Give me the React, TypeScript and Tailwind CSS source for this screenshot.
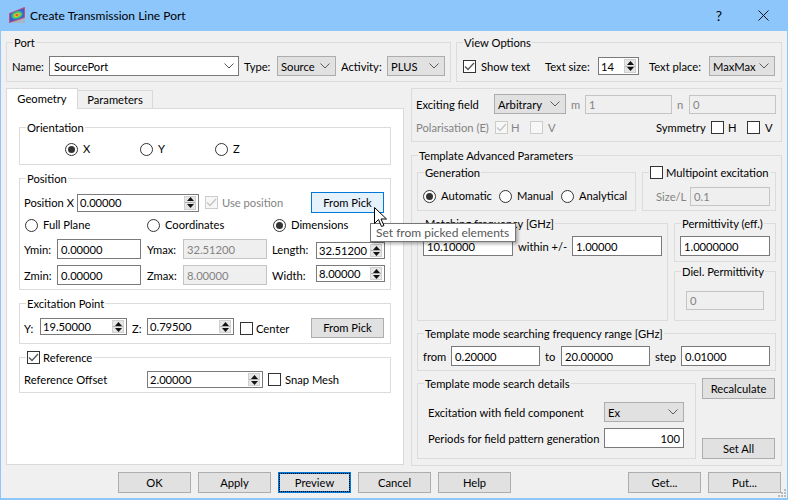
// Create Transmission Line Port dialog, Windows 10 style Qt form.
import type { ReactNode } from "react";
import clsx from "clsx";

function Group({ title, className, inner, children }: { title: ReactNode; className?: string; inner?: string; children: ReactNode }) {
  return (
    <fieldset className={clsx("border border-[#dcdcdc] min-w-0", className)}>
      <legend className="ml-[6px] px-[1px] pt-[1px] h-[14px] leading-[14px] flex items-center whitespace-nowrap">{title}</legend>
      <div className={inner}>{children}</div>
    </fieldset>
  );
}

function Label({ className, children }: { className?: string; children: ReactNode }) {
  return <span className={clsx("shrink-0 pt-[1px] whitespace-nowrap", className)}>{children}</span>;
}

function Field({ value, className, disabled, right }: { value: string; className?: string; disabled?: boolean; right?: boolean }) {
  return (
    <div
      className={clsx(
        "shrink-0 flex items-center px-[3px] pt-[1px] border whitespace-nowrap",
        disabled ? "border-[#c4c4c4] bg-[#efefef] text-[#838383]" : "border-[#7a7a7a] bg-white",
        right && "justify-end",
        className,
      )}
    >
      {value}
    </div>
  );
}

function Spin({ value, className }: { value: string; className?: string }) {
  return (
    <div className={clsx("shrink-0 flex items-center pl-[2px] border border-[#7a7a7a] bg-white", className)}>
      <span className="flex-1 pt-[1px] whitespace-nowrap">{value}</span>
      <div className="flex flex-col self-stretch w-[12px] my-[1px] mr-[2px] border border-[#d0d0d0] bg-[#e6e6e6]">
        <div className="flex-1 flex items-center justify-center border-b border-[#b0b0b0]">
          <svg width="7" height="4" viewBox="0 0 7 4"><path d="M3.5 0 7 4H0z" fill="#111" /></svg>
        </div>
        <div className="flex-1 flex items-center justify-center">
          <svg width="7" height="4" viewBox="0 0 7 4"><path d="M0 0h7L3.5 4z" fill="#111" /></svg>
        </div>
      </div>
    </div>
  );
}

function Chevron() {
  return (
    <svg width="10" height="6" viewBox="0 0 10 6" className="shrink-0" fill="none" stroke="#5a5a5a" strokeWidth="1">
      <path d="M.5.5 5 5 9.500.5" />
    </svg>
  );
}

function Select({ value, className }: { value: string; className?: string }) {
  return (
    <div className={clsx("shrink-0 flex items-center justify-between pl-[3px] pr-[5px] border border-[#adadad] bg-[#e1e1e1]", className)}>
      <span className="pt-[1px]">{value}</span>
      <Chevron />
    </div>
  );
}

function Check({ checked, disabled, className }: { checked?: boolean; disabled?: boolean; className?: string }) {
  return (
    <span
      className={clsx(
        "shrink-0 w-[13px] h-[13px] border flex items-center justify-center",
        disabled ? "border-[#cccccc] bg-[#f7f7f7]" : "border-[#333333] bg-white",
        className,
      )}
    >
      {checked && (
        <svg width="11" height="9" viewBox="0 0 11 9" fill="none" stroke={disabled ? "#c4c4c4" : "#555555"} strokeWidth="1.3">
          <path d="M1 4.500 4 7.500 10 1" />
        </svg>
      )}
    </span>
  );
}

function Radio({ label, checked, className }: { label: string; checked?: boolean; className?: string }) {
  return (
    <div className={clsx("shrink-0 flex items-center h-[16px] whitespace-nowrap", className)}>
      <span className="shrink-0 w-[13px] h-[13px] mr-[5px] rounded-full border border-[#333333] bg-white flex items-center justify-center">
        {checked && <span className="w-[7px] h-[7px] rounded-full bg-[#333333]" />}
      </span>
      {label}
    </div>
  );
}

function Btn({ label, className }: { label: string; className?: string }) {
  return (
    <div className={clsx("shrink-0 w-[73px] h-[21px] flex items-center justify-center border border-[#adadad] bg-[#e1e1e1]", className)}>
      {label}
    </div>
  );
}

function AppIcon() {
  return (
    <svg width="17" height="17" viewBox="0 0 17 17" className="shrink-0">
      <path d="M4 14.500 16 11V16H4z" fill="#a9b6c2" />
      <path d="M.5 6.500 15.500.5V10.500L.5 15.500z" fill="#3f5ccb" stroke="#c2527a" />
      <ellipse cx="8" cy="8" rx="6" ry="3.800" transform="rotate(-20 8 8)" fill="#27b2a4" />
      <ellipse cx="8" cy="8" rx="4.500" ry="2.700" transform="rotate(-20 8 8)" fill="#73c83c" />
      <ellipse cx="8" cy="8" rx="3" ry="1.700" transform="rotate(-20 8 8)" fill="#e2c83a" />
      <ellipse cx="8" cy="8" rx="1.700" ry="0.900" transform="rotate(-20 8 8)" fill="#d8463a" />
    </svg>
  );
}

function PositionRows() {
  return (
    <>
      <div className="flex items-center h-[21px]">
        <Label className="w-[53px]">Position X</Label>
        <Spin value="0.00000" className="w-[122px] h-[18px]" />
        <Check checked disabled className="ml-[6px]" />
        <Label className="ml-[4px] w-[89px] text-[#838383]">Use position</Label>
        <Btn label="From Pick" className="!border-[#0078d7] !bg-[#e5f1fb]" />
      </div>
      <div className="flex items-center mt-[4px] ml-[1px]">
        <Radio label="Full Plane" className="w-[122px]" />
        <Radio label="Coordinates" className="w-[126px]" />
        <Radio label="Dimensions" checked />
      </div>
      <div className="flex items-center h-[20px] mt-[6px]">
        <Label className="w-[33px]">Ymin:</Label>
        <Field value="0.00000" className="w-[84px] h-[20px]" />
        <Label className="ml-[6px] w-[36px]">Ymax:</Label>
        <Field value="32.51200" disabled className="w-[84px] h-[20px]" />
        <Label className="ml-[5px] w-[44px]">Length:</Label>
        <Spin value="32.51200" className="w-[69px] h-[17px] self-end" />
      </div>
      <div className="flex items-center h-[20px] mt-[6px]">
        <Label className="w-[33px]">Zmin:</Label>
        <Field value="0.00000" className="w-[84px] h-[20px]" />
        <Label className="ml-[6px] w-[36px]">Zmax:</Label>
        <Field value="8.00000" disabled className="w-[84px] h-[20px]" />
        <Label className="ml-[5px] w-[44px]">Width:</Label>
        <Spin value="8.00000" className="w-[69px] h-[17px] self-start" />
      </div>
    </>
  );
}

function GeometryPane() {
  return (
    <div className="flex flex-col -mt-px h-[357px] border border-[#d9d9d9] bg-white px-[12px] pt-[11px]">
      <Group title="Orientation" className="h-[45px]" inner="flex pt-[7px] pl-[45px]">
        <Radio label="X" checked className="w-[75px]" />
        <Radio label="Y" className="w-[75px]" />
        <Radio label="Z" />
      </Group>
      <Group title="Position" className="h-[119px] mt-[6px]" inner="pt-[7px] pl-[4px]">
        <PositionRows />
      </Group>
      <Group title="Excitation Point" className="h-[48px] mt-[6px]" inner="flex items-center h-[28px] pt-[8px] pl-[4px]">
        <Label className="w-[16px]">Y:</Label>
        <Spin value="19.50000" className="w-[87px] h-[17px] self-start" />
        <Label className="ml-[5px] w-[15px]">Z:</Label>
        <Spin value="0.79500" className="w-[87px] h-[17px] self-start" />
        <Check className="ml-[6px]" />
        <Label className="ml-[3px] w-[55px]">Center</Label>
        <Btn label="From Pick" className="!h-[20px]" />
      </Group>
      <Group
        title={
          <>
            <Check checked />
            <span className="ml-[3px] pr-[1px]">Reference</span>
          </>
        }
        className="h-[43px] mt-[6px]"
        inner="flex items-center pt-[7px] pl-[4px]"
      >
        <Label className="w-[123px]">Reference Offset</Label>
        <Spin value="2.00000" className="w-[116px] h-[17px]" />
        <Check className="ml-[5px]" />
        <Label className="ml-[4px]">Snap Mesh</Label>
      </Group>
    </div>
  );
}

function ExcitingField() {
  return (
    <div className="h-[54px] border border-[#dcdcdc] pt-[5px] pl-[4px]">
      <div className="flex items-center h-[20px]">
        <Label className="w-[78px]">Exciting field</Label>
        <Select value="Arbitrary" className="w-[72px] h-[20px]" />
        <Label className="ml-[5px] w-[14px] text-[#838383]">m</Label>
        <Field value="1" disabled className="w-[87px] h-[19px]" />
        <Label className="ml-[5px] w-[12px] text-[#838383]">n</Label>
        <Field value="0" disabled className="w-[87px] h-[19px]" />
      </div>
      <div className="flex items-center h-[18px] mt-[4px]">
        <Label className="w-[79px] text-[#838383]">Polarisation (E)</Label>
        <Check checked disabled />
        <Label className="ml-[3px] w-[19px] text-[#838383]">H</Label>
        <Check disabled />
        <Label className="ml-[5px] w-[108px] text-[#838383]">V</Label>
        <Label className="w-[55px]">Symmetry</Label>
        <Check />
        <Label className="ml-[4px] w-[19px]">H</Label>
        <Check />
        <Label className="ml-[5px]">V</Label>
      </div>
    </div>
  );
}

function TemplateParams() {
  return (
    <Group title="Template Advanced Parameters" className="h-[318px] mt-[6px]" inner="px-[5px] pt-[3px]">
      <div className="flex gap-[6px]">
        <Group title="Generation" className="w-[219px] h-[46px]" inner="flex pt-[9px] pl-[5px]">
          <Radio label="Automatic" checked className="w-[76px]" />
          <Radio label="Manual" className="w-[62px]" />
          <Radio label="Analytical" />
        </Group>
        <Group
          title={
            <>
              <Check />
              <span className="ml-[3px] pr-[1px]">Multipoint excitation</span>
            </>
          }
          className="w-[134px] h-[46px]"
          inner="flex items-center pt-[8px] pl-[13px]"
        >
          <Label className="w-[34px] text-[#838383]">Size/L</Label>
          <Field value="0.1" disabled className="w-[80px] h-[19px]" />
        </Group>
      </div>
      <div className="flex gap-[6px] mt-[5px]">
        <Group title="Matching frequency [GHz]" className="w-[251px] h-[105px]" inner="flex items-center pt-[6px] pl-[5px]">
          <Field value="10.10000" className="w-[90px] h-[20px]" />
          <Label className="ml-[5px] w-[54px]">within +/-</Label>
          <Field value="1.00000" className="w-[90px] h-[20px]" />
        </Group>
        <div className="flex flex-col w-[102px]">
          <Group title="Permittivity (eff.)" className="h-[46px]" inner="pt-[6px] pl-[5px]">
            <Field value="1.0000000" className="w-[90px] h-[20px]" />
          </Group>
          <Group title="Diel. Permittivity" className="h-[57px] mt-[2px]" inner="pt-[13px] pl-[11px]">
            <Field value="0" disabled className="w-[78px] h-[19px]" />
          </Group>
        </div>
      </div>
      <Group title="Template mode searching frequency range [GHz]" className="h-[45px] mt-[5px]" inner="flex items-center pt-[6px] pl-[5px]">
        <Label className="w-[28px]">from</Label>
        <Field value="0.20000" className="w-[89px] h-[20px]" />
        <Label className="ml-[5px] w-[16px]">to</Label>
        <Field value="20.00000" className="w-[89px] h-[20px]" />
        <Label className="ml-[5px] w-[26px]">step</Label>
        <Field value="0.01000" className="w-[89px] h-[20px]" />
      </Group>
      <div className="flex h-[83px] mt-[5px]">
        <Group title="Template mode search details" className="w-[279px]" inner="pt-[12px] pl-[10px]">
          <div className="flex items-center">
            <Label className="w-[176px]">Excitation with field component</Label>
            <Select value="Ex" className="w-[80px] h-[20px]" />
          </div>
          <div className="flex items-center mt-[6px]">
            <Label className="w-[176px]">Periods for field pattern generation</Label>
            <Field value="100" right className="w-[80px] h-[20px]" />
          </div>
        </Group>
        <div className="flex flex-col justify-between ml-[6px] pt-[2px]">
          <Btn label="Recalculate" />
          <Btn label="Set All" />
        </div>
      </div>
    </Group>
  );
}

export default function App() {
  return (
    <div className="relative w-[788px] h-[500px] overflow-hidden flex flex-col bg-[#f0f0f0] border-x border-b-2 border-[#8cc6fb] text-[11.2px] leading-[14px] text-black font-['Lato',sans-serif]">
      <div className="shrink-0 h-[31px] -mx-px flex items-center bg-[#8cc6fb] pl-[9px]">
        <AppIcon />
        <span className="ml-[4px] text-[12px]">Create Transmission Line Port</span>
        <span className="ml-auto text-[14px] mr-[36px]">?</span>
        <svg width="11" height="11" viewBox="0 0 11 11" className="mr-[19px]" stroke="#111" strokeWidth="1" fill="none">
          <path d="M.5.5l10 10M10.500.5l-10 10" />
        </svg>
      </div>

      <div className="flex gap-[5px] pl-[5px] pt-[4px]">
        <Group title="Port" className="w-[445px] h-[47px]" inner="flex items-center pt-[7px] pl-[5px]">
          <Label className="w-[37px]">Name:</Label>
          <div className="shrink-0 w-[190px] h-[20px] flex items-center justify-between pl-[4px] pr-[4px] border border-[#7a7a7a] bg-white">
            <span className="pt-[1px]">SourcePort</span>
            <Chevron />
          </div>
          <Label className="ml-[5px] w-[33px]">Type:</Label>
          <Select value="Source" className="w-[59px] h-[20px]" />
          <Label className="ml-[5px] w-[46px]">Activity:</Label>
          <Select value="PLUS" className="w-[58px] h-[20px]" />
        </Group>
        <Group title="View Options" className="w-[326px] h-[47px]" inner="flex items-center pt-[7px] pl-[6px]">
          <Check checked />
          <Label className="ml-[5px] w-[64px]">Show text</Label>
          <Label className="w-[53px]">Text size:</Label>
          <Spin value="14" className="w-[41px] h-[18px]" />
          <Label className="ml-[10px] w-[60px]">Text place:</Label>
          <Select value="MaxMax" className="w-[66px] h-[20px]" />
        </Group>
      </div>

      <div className="flex mt-[6px] pl-[5px]">
        <div className="w-[398px]">
          <div className="flex items-start h-[21px]">
            <div className="relative z-10 w-[72px] h-[21px] flex items-center justify-center border border-b-0 border-[#d9d9d9] bg-white">Geometry</div>
            <div className="w-[75px] h-[19px] mt-[2px] flex items-center justify-center border border-l-0 border-[#d9d9d9]">Parameters</div>
          </div>
          <GeometryPane />
        </div>
        <div className="w-[371px] ml-[7px]">
          <ExcitingField />
          <TemplateParams />
        </div>
      </div>

      <div className="flex gap-[7px] mt-[6px] pl-[117px]">
        <Btn label="OK" />
        <Btn label="Apply" />
        <Btn label="Preview" className="border-2 !border-[#0078d7] outline-1 outline-dotted outline-black -outline-offset-2" />
        <Btn label="Cancel" />
        <Btn label="Help" />
        <Btn label="Get..." className="ml-[110px]" />
        <Btn label="Put..." />
      </div>

      {/* resize grip */}
      <svg width="8" height="8" viewBox="0 0 8 8" className="absolute right-[1px] bottom-[1px]" fill="#bcbcbc">
        <rect x="6" y="0" width="2" height="2" />
        <rect x="3" y="3" width="2" height="2" />
        <rect x="6" y="3" width="2" height="2" />
        <rect x="0" y="6" width="2" height="2" />
        <rect x="3" y="6" width="2" height="2" />
        <rect x="6" y="6" width="2" height="2" />
      </svg>

      {/* tooltip and mouse pointer over the form */}
      <div className="absolute left-[369px] top-[223px] w-[146px] h-[19px] flex items-center pl-[5px] border border-[#767676] bg-white text-[12px] text-[#575757] shadow-[2px_2px_3px_rgba(0,0,0,0.3)] whitespace-nowrap">
        Set from picked elements
      </div>
      <svg width="14" height="21" viewBox="0 0 14 21" className="absolute left-[373px] top-[207px]">
        <path d="M.5.5v16l4-4 3 7 2.500-1-3-6.500h5.500z" fill="#fff" stroke="#000" />
      </svg>
    </div>
  );
}
